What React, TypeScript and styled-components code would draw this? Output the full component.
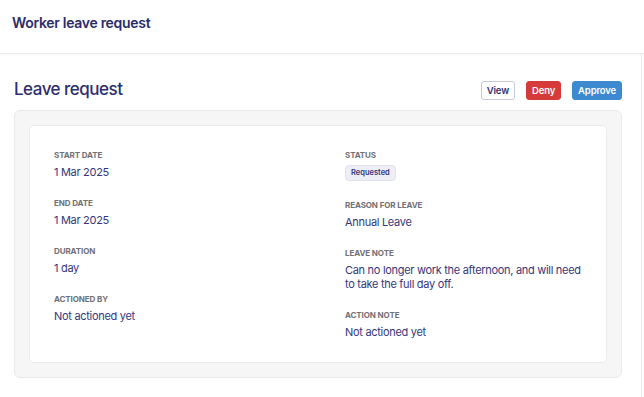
import React from "react";
import styled, { createGlobalStyle } from "styled-components";

const GlobalStyle = createGlobalStyle`
  html, body {
    margin: 0;
    padding: 0;
    background: #ffffff;
  }
  body {
    font-family: Inter, "Noto Sans", sans-serif;
    color: #2f306f;
    -webkit-font-smoothing: antialiased;
  }
`;

const Page = styled.div`
  width: 644px;
  height: 397px;
  display: flex;
  flex-direction: column;
  overflow: hidden;
`;

const TopBar = styled.header`
  height: 54px;
  flex-shrink: 0;
  display: flex;
  align-items: center;
  padding: 0 12px;
  box-sizing: border-box;
  border-bottom: 1px solid #eaebf0;
  box-shadow: 0 1px 2px rgba(30, 30, 60, 0.04);
`;

const TopTitle = styled.h1`
  margin: 0 0 9px;
  font-size: 14px;
  font-weight: 600;
  letter-spacing: -0.3px;
  color: #2b2c68;
`;

const Main = styled.main`
  flex: 1;
  width: 642px;
  border-right: 1px solid #ececef;
  padding: 24px 19px 0 14px;
  box-sizing: border-box;
`;

const SectionHead = styled.div`
  display: flex;
  align-items: center;
  justify-content: space-between;
  height: 22px;
  margin-bottom: 10px;
`;

const SectionTitle = styled.h2`
  margin: 0;
  font-size: 17px;
  font-weight: 500;
  letter-spacing: -0.5px;
  color: #2d2e6c;
`;

const Actions = styled.div`
  display: flex;
  gap: 11px;
  padding-top: 2px;
`;

const Button = styled.button<{ $tone: "plain" | "danger" | "primary" }>`
  height: 19px;
  padding: 0 5px;
  border-radius: 3px;
  font-family: Inter, "Noto Sans", sans-serif;
  font-size: 9.5px;
  font-weight: 600;
  letter-spacing: -0.15px;
  cursor: pointer;
  border: 1px solid
    ${(p) =>
      p.$tone === "plain" ? "#c9c9dc" : p.$tone === "danger" ? "#d63a3a" : "#3d8ad1"};
  background: ${(p) =>
    p.$tone === "plain" ? "#ffffff" : p.$tone === "danger" ? "#d63a3a" : "#3d8ad1"};
  color: ${(p) => (p.$tone === "plain" ? "#2f306f" : "#ffffff")};
`;

const OuterCard = styled.div`
  background: #f6f6f6;
  border: 1px solid #ebebeb;
  border-radius: 6px;
  padding: 14px;
`;

const InnerCard = styled.div`
  background: #ffffff;
  border: 1px solid #ebebeb;
  border-radius: 5px;
  padding: 24px 21px 23px 24px;
  display: grid;
  grid-template-columns: 291px 1fr;
`;

const Column = styled.div`
  display: flex;
  flex-direction: column;
  gap: 19px;
`;

const Field = styled.div`
  display: flex;
  flex-direction: column;
  gap: 5px;
`;

const Label = styled.div`
  font-size: 8px;
  font-weight: 700;
  letter-spacing: -0.1px;
  text-transform: uppercase;
  color: #707076;
  line-height: 10px;
`;

const Value = styled.div`
  font-size: 11px;
  line-height: 14px;
  letter-spacing: -0.3px;
  color: #35367c;
`;

const Badge = styled.span`
  align-self: flex-start;
  padding: 2px 5px;
  border-radius: 4px;
  border: 1px solid #e2e2ee;
  background: #eeeef6;
  font-size: 7.5px;
  font-weight: 600;
  line-height: 10px;
  color: #33347a;
`;

const left = [
  { label: "Start date", value: "1 Mar 2025" },
  { label: "End date", value: "1 Mar 2025" },
  { label: "Duration", value: "1 day" },
  { label: "Actioned by", value: "Not actioned yet" },
];

const right = [
  { label: "Reason for leave", value: "Annual Leave" },
  {
    label: "Leave note",
    value: "Can no longer work the afternoon, and will need to take the full day off.",
  },
  { label: "Action note", value: "Not actioned yet" },
];

export default function App() {
  return (
    <Page>
      <GlobalStyle />
      <TopBar>
        <TopTitle>Worker leave request</TopTitle>
      </TopBar>
      <Main>
        <SectionHead>
          <SectionTitle>Leave request</SectionTitle>
          <Actions>
            <Button $tone="plain">View</Button>
            <Button $tone="danger">Deny</Button>
            <Button $tone="primary">Approve</Button>
          </Actions>
        </SectionHead>
        <OuterCard>
          <InnerCard>
            <Column>
              {left.map((f) => (
                <Field key={f.label}>
                  <Label>{f.label}</Label>
                  <Value>{f.value}</Value>
                </Field>
              ))}
            </Column>
            <Column>
              <Field>
                <Label>Status</Label>
                <Badge>Requested</Badge>
              </Field>
              {right.map((f) => (
                <Field key={f.label}>
                  <Label>{f.label}</Label>
                  <Value>{f.value}</Value>
                </Field>
              ))}
            </Column>
          </InnerCard>
        </OuterCard>
      </Main>
    </Page>
  );
}
